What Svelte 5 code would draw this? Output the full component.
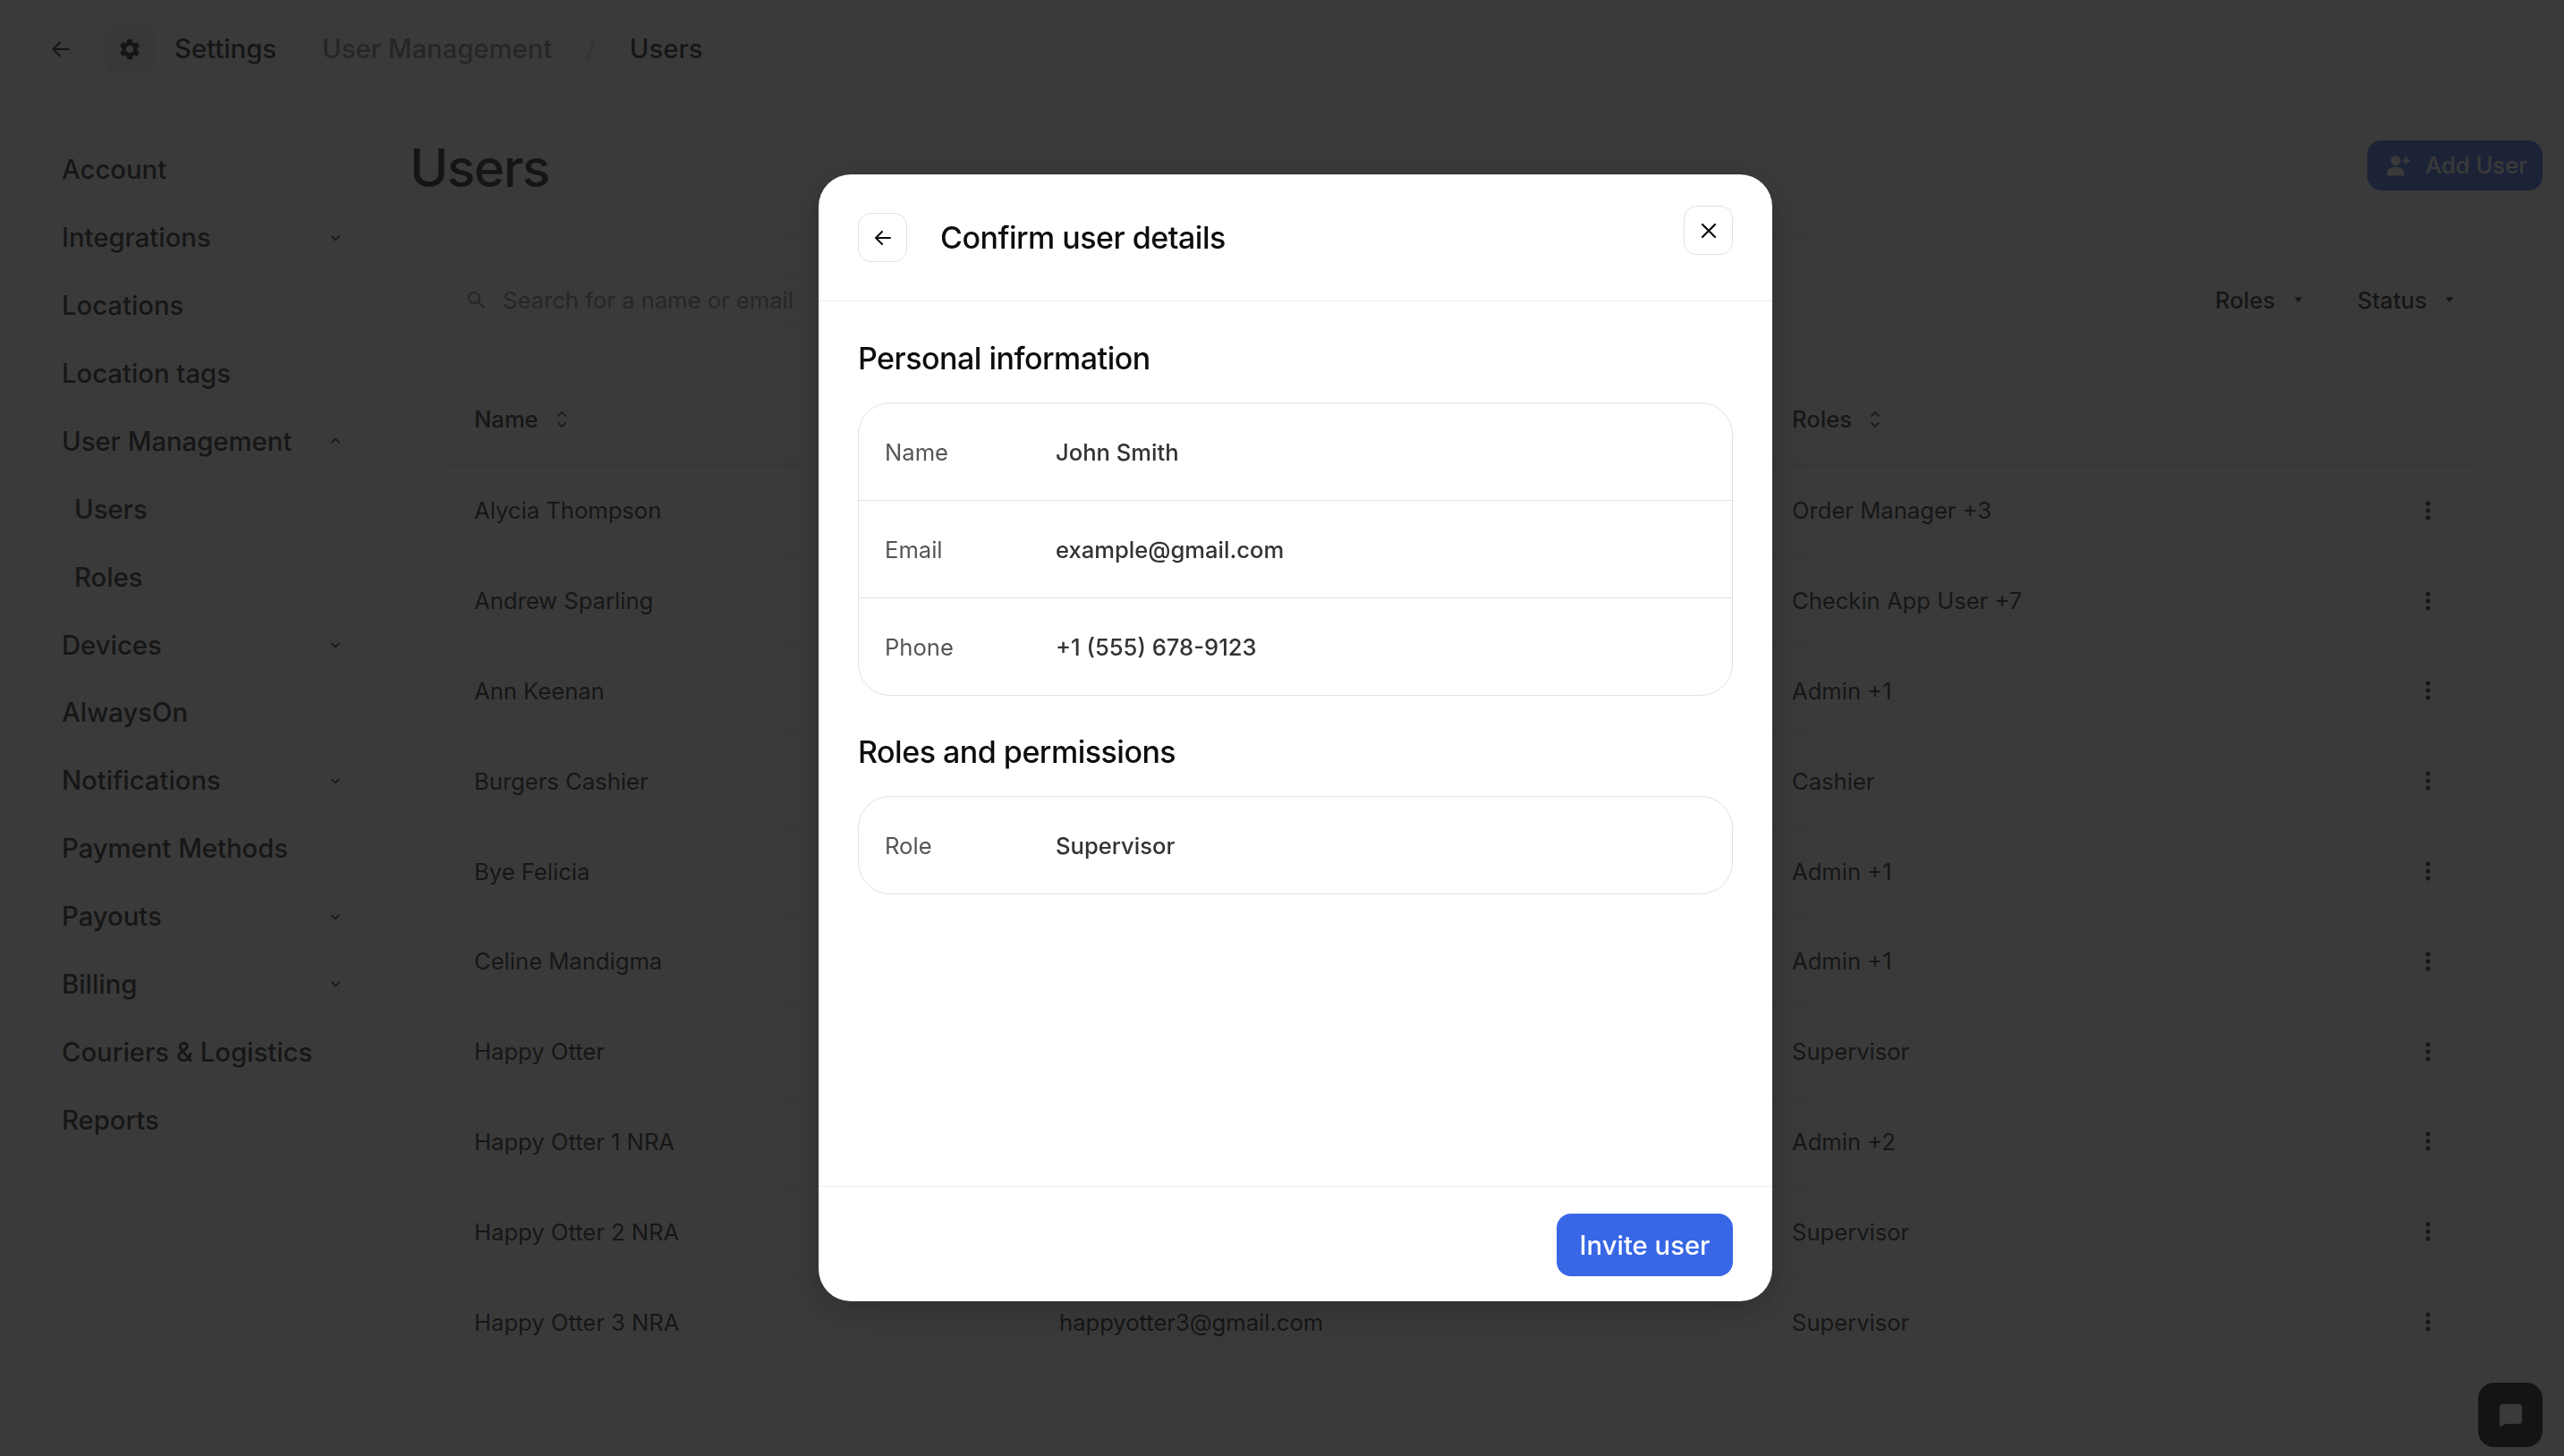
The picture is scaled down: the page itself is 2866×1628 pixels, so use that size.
<script>
	const navItems = [
		{ label: 'Account' },
		{ label: 'Integrations', chevron: 'down' },
		{ label: 'Locations' },
		{ label: 'Location tags' },
		{ label: 'User Management', chevron: 'up' },
		{ label: 'Users', sub: true, active: true },
		{ label: 'Roles', sub: true },
		{ label: 'Devices', chevron: 'down' },
		{ label: 'AlwaysOn' },
		{ label: 'Notifications', chevron: 'down' },
		{ label: 'Payment Methods' },
		{ label: 'Payouts', chevron: 'down' },
		{ label: 'Billing', chevron: 'down' },
		{ label: 'Couriers & Logistics' },
		{ label: 'Reports' }
	];

	const users = [
		{ name: 'Alycia Thompson', email: '', roles: 'Order Manager +3' },
		{ name: 'Andrew Sparling', email: '', roles: 'Checkin App User +7' },
		{ name: 'Ann Keenan', email: '', roles: 'Admin +1' },
		{ name: 'Burgers Cashier', email: '', roles: 'Cashier' },
		{ name: 'Bye Felicia', email: '', roles: 'Admin +1' },
		{ name: 'Celine Mandigma', email: '', roles: 'Admin +1' },
		{ name: 'Happy Otter', email: '', roles: 'Supervisor' },
		{ name: 'Happy Otter 1 NRA', email: '', roles: 'Admin +2' },
		{ name: 'Happy Otter 2 NRA', email: '', roles: 'Supervisor' },
		{ name: 'Happy Otter 3 NRA', email: 'happyotter3@gmail.com', roles: 'Supervisor' }
	];

	const personal = [
		{ label: 'Name', value: 'John Smith' },
		{ label: 'Email', value: 'example@gmail.com' },
		{ label: 'Phone', value: '+1 (555) 678-9123' }
	];
</script>

<div class="page">
	<header class="topbar">
		<svg class="back" viewBox="0 0 24 24" width="26" height="26" fill="none" stroke="currentColor" stroke-width="2" stroke-linecap="round" stroke-linejoin="round">
			<path d="M20 12H4.5M11 5l-7 7 7 7" />
		</svg>
		<span class="gear">
			<svg viewBox="0 0 24 24" width="28" height="28" fill="currentColor">
				<path d="M19.14 12.94c.04-.3.06-.61.06-.94 0-.32-.02-.64-.07-.94l2.03-1.58c.18-.14.23-.41.12-.61l-1.92-3.32c-.12-.22-.37-.29-.59-.22l-2.39.96c-.5-.38-1.03-.7-1.62-.94l-.36-2.54c-.04-.24-.24-.41-.48-.41h-3.84c-.24 0-.43.17-.47.41l-.36 2.54c-.59.24-1.13.57-1.62.94l-2.39-.96c-.22-.08-.47 0-.59.22L2.74 8.87c-.12.21-.08.47.12.61l2.03 1.58c-.05.3-.09.63-.09.94s.02.64.07.94l-2.03 1.58c-.18.14-.23.41-.12.61l1.92 3.32c.12.22.37.29.59.22l2.39-.96c.5.38 1.03.7 1.62.94l.36 2.54c.05.24.24.41.48.41h3.84c.24 0 .44-.17.47-.41l.36-2.54c.59-.24 1.13-.56 1.62-.94l2.39.96c.22.08.47 0 .59-.22l1.92-3.32c.12-.22.07-.47-.12-.61l-2.01-1.58zM12 15.6c-1.98 0-3.6-1.62-3.6-3.6s1.62-3.6 3.6-3.6 3.6 1.62 3.6 3.6-1.62 3.6-3.6 3.6z" />
			</svg>
		</span>
		<span class="crumb-root">Settings</span>
		<span class="crumb-muted">User Management</span>
		<span class="crumb-slash">/</span>
		<span class="crumb-current">Users</span>
	</header>

	<div class="layout">
		<nav class="sidebar">
			{#each navItems as item}
				<div class="nav-item" class:sub={item.sub} class:active={item.active}>
					<span>{item.label}</span>
					{#if item.chevron}
						<svg class="chev" class:up={item.chevron === 'up'} viewBox="0 0 12 12" width="14" height="14" fill="none" stroke="currentColor" stroke-width="1.5" stroke-linecap="round" stroke-linejoin="round">
							<path d="M2.5 4.5 6 8l3.5-3.5" />
						</svg>
					{/if}
				</div>
			{/each}
		</nav>

		<main class="content">
			<div class="title-row">
				<h1>Users</h1>
				<button class="add-user">
					<svg viewBox="0 0 26 24" width="28" height="26" fill="currentColor">
						<circle cx="10" cy="7" r="5" />
						<path d="M1 21c0-5 4-7.5 9-7.5s9 2.500 9 7.500c0 1-.6 1.500-1.500 1.500h-15C1.600 22.500 1 22 1 21z" />
						<path d="M20 3h2v3h3v2h-3v3h-2V8h-3V6h3z" />
					</svg>
					Add User
				</button>
			</div>

			<section class="panel">
				<div class="toolbar">
					<div class="search">
						<svg viewBox="0 0 24 24" width="24" height="24" fill="none" stroke="currentColor" stroke-width="2" stroke-linecap="round">
							<circle cx="10" cy="10" r="6" />
							<path d="m15 15 6 6" />
						</svg>
						<span>Search for a name or email</span>
					</div>
					<div class="filters">
						<div class="filter roles-filter">
							Roles
							<svg viewBox="0 0 12 12" width="12" height="12" fill="currentColor"><path d="M1.500 3.500h9L6 9z" /></svg>
						</div>
						<div class="filter status-filter">
							Status
							<svg viewBox="0 0 12 12" width="12" height="12" fill="currentColor"><path d="M1.500 3.500h9L6 9z" /></svg>
						</div>
					</div>
				</div>

				<div class="table">
					<div class="row head">
						<span class="cell-name">Name
							<svg viewBox="0 0 12 24" width="12" height="24" fill="none" stroke="currentColor" stroke-width="1.7" stroke-linecap="round" stroke-linejoin="round"><path d="M2 8l4-4 4 4M2 16l4 4 4-4" /></svg>
						</span>
						<span></span>
						<span class="cell-name">Roles
							<svg viewBox="0 0 12 24" width="12" height="24" fill="none" stroke="currentColor" stroke-width="1.7" stroke-linecap="round" stroke-linejoin="round"><path d="M2 8l4-4 4 4M2 16l4 4 4-4" /></svg>
						</span>
						<span></span>
					</div>
					{#each users as user}
						<div class="row">
							<span>{user.name}</span>
							<span>{user.email}</span>
							<span>{user.roles}</span>
							<svg class="dots" viewBox="0 0 6 24" width="6" height="24" fill="currentColor">
								<circle cx="3" cy="4" r="2.500" /><circle cx="3" cy="12" r="2.500" /><circle cx="3" cy="20" r="2.500" />
							</svg>
						</div>
					{/each}
				</div>
			</section>
		</main>
	</div>

	<button class="chat" aria-label="Chat">
		<svg viewBox="0 0 24 24" width="25" height="25" fill="currentColor">
			<path d="M3 0h18a3 3 0 0 1 3 3v15a3 3 0 0 1-3 3H6l-5 3.500c-.5.300-1 0-1-.5V3a3 3 0 0 1 3-3z" />
		</svg>
	</button>
</div>

<div class="overlay"></div>

<div class="modal">
	<div class="modal-head">
		<button class="icon-btn" aria-label="Back">
			<svg viewBox="0 0 24 24" width="24" height="24" fill="none" stroke="currentColor" stroke-width="2" stroke-linecap="round" stroke-linejoin="round">
				<path d="M20 12H4.500M11 5l-7 7 7 7" />
			</svg>
		</button>
		<h2>Confirm user details</h2>
		<button class="icon-btn close" aria-label="Close">
			<svg viewBox="0 0 24 24" width="24" height="24" fill="none" stroke="currentColor" stroke-width="2.200" stroke-linecap="round">
				<path d="M5 5l14 14M19 5 5 19" />
			</svg>
		</button>
	</div>

	<div class="modal-body">
		<h3>Personal information</h3>
		<div class="details">
			{#each personal as row}
				<div class="detail">
					<span class="detail-label">{row.label}</span>
					<span class="detail-value">{row.value}</span>
				</div>
			{/each}
		</div>

		<h3 class="second">Roles and permissions</h3>
		<div class="details">
			<div class="detail">
				<span class="detail-label">Role</span>
				<span class="detail-value">Supervisor</span>
			</div>
		</div>
	</div>

	<div class="modal-foot">
		<button class="invite">Invite user</button>
	</div>
</div>

<style>
	:global(body) {
		margin: 0;
		background: #fff;
	}

	.page,
	.modal,
	button {
		font-family: Inter, 'Liberation Sans', sans-serif;
	}

	.page {
		width: 2866px;
		height: 1628px;
		overflow: hidden;
		position: relative;
		background: #fff;
		color: #0d0d0d;
	}

	button {
		border: 0;
		cursor: pointer;
	}

	.topbar {
		display: flex;
		align-items: center;
		height: 110px;
		box-sizing: border-box;
		padding-left: 55px;
		border-bottom: 1px solid #e8e8e8;
		font-size: 29.25px;
		font-weight: 500;
	}

	.back {
		margin-right: 36px;
	}

	.gear {
		display: flex;
		align-items: center;
		justify-content: center;
		width: 56px;
		height: 56px;
		border-radius: 14px;
		background: #efefef;
		margin-right: 22px;
	}

	.crumb-muted {
		margin-left: 51px;
		color: #7a7a7a;
	}

	.crumb-slash {
		margin-left: 38px;
		color: #d0d0d0;
		font-weight: 400;
	}

	.crumb-current {
		margin-left: 38px;
	}

	.layout {
		display: flex;
	}

	.sidebar {
		width: 457px;
		flex: none;
		box-sizing: border-box;
		padding: 42px 59px 0 69px;
	}

	.nav-item {
		display: flex;
		align-items: center;
		justify-content: space-between;
		height: 75.88px;
		box-sizing: border-box;
		padding-right: 16px;
		font-size: 29.25px;
		font-weight: 500;
		color: #111;
	}

	.nav-item.sub {
		padding-left: 14px;
	}

	.nav-item.active {
		background: #f3f3f3;
		border-radius: 14px;
	}

	.chev.up {
		transform: rotate(180deg);
	}

	.content {
		flex: 1;
		min-width: 0;
		padding-right: 55px;
	}

	.title-row {
		display: flex;
		align-items: center;
		justify-content: space-between;
		height: 152px;
		margin-right: -30.500px;
		padding-left: 1px;
	}

	h1 {
		margin: 0 0 -2px;
		font-size: 58.500px;
		font-weight: 500;
		letter-spacing: -1.500px;
	}

	.add-user {
		display: flex;
		align-items: center;
		gap: 16px;
		width: 195.500px;
		height: 56px;
		margin-top: -3px;
		box-sizing: border-box;
		padding-left: 21px;
		border-radius: 16px;
		background: #3767e5;
		color: #fff;
		font-size: 25.600px;
		font-weight: 500;
	}

	.panel {
		height: 1500px;
		box-sizing: border-box;
		padding: 44px 43px 0 44px;
		border: 1px solid #e8e8e8;
		border-radius: 36px;
	}

	.toolbar {
		display: flex;
		justify-content: space-between;
		height: 56px;
		font-size: 25.600px;
	}

	.search {
		display: flex;
		align-items: center;
		gap: 18px;
		width: 600px;
		box-sizing: border-box;
		padding-left: 17px;
		border: 1px solid #e8e8e8;
		border-radius: 16px;
		color: #7a7a7a;
	}

	.filters {
		display: flex;
		gap: 15px;
	}

	.filter {
		display: flex;
		align-items: center;
		justify-content: space-between;
		box-sizing: border-box;
		border: 1px solid #e8e8e8;
		border-radius: 16px;
		font-weight: 500;
	}

	.roles-filter {
		width: 143px;
		padding: 0 22px 0 20px;
	}

	.status-filter {
		width: 154px;
		padding: 0 22px 0 21px;
	}

	.table {
		margin-top: 56px;
		font-size: 25.600px;
		color: #111;
	}

	.row {
		display: grid;
		grid-template-columns: 654px 819px 708px 1fr;
		align-items: center;
		height: 100.800px;
		box-sizing: border-box;
		padding-left: 28px;
		border-bottom: 1px solid #ececec;
	}

	.row.head {
		height: 102px;
		border-bottom-width: 3px;
		font-weight: 500;
	}

	.cell-name {
		display: flex;
		align-items: center;
		gap: 20px;
	}

	.modal-foot,
	.modal-head {
		display: flex;
	}

	.overlay {
		position: fixed;
		inset: 0;
		background: rgba(23, 23, 23, 0.85);
	}

	.chat {
		position: absolute;
		left: 2770px;
		top: 1546px;
		display: flex;
		align-items: center;
		justify-content: center;
		width: 72px;
		height: 72px;
		border-radius: 18px;
		background: #000;
		color: #fff;
	}

	.modal {
		position: fixed;
		left: 915px;
		top: 195px;
		display: flex;
		flex-direction: column;
		width: 1066px;
		height: 1260px;
		border-radius: 36px;
		background: #fff;
		color: #0d0d0d;
		box-shadow: 0 10px 40px rgba(0, 0, 0, 0.2);
	}

	.modal-head {
		flex: none;
		align-items: center;
		height: 142px;
		box-sizing: border-box;
		padding: 0 44px;
		border-bottom: 1px solid #ececec;
	}

	.icon-btn {
		display: flex;
		align-items: center;
		justify-content: center;
		width: 55px;
		height: 55px;
		flex: none;
		padding: 0;
		background: #fff;
		border: 1px solid #e2e2e2;
		border-radius: 14px;
		color: #0d0d0d;
	}

	.close {
		align-self: flex-start;
		margin-top: 35px;
	}

	h2 {
		flex: 1;
		margin: 0 0 0 37px;
		font-size: 34px;
		font-weight: 500;
		letter-spacing: -0.500px;
	}

	.modal-body {
		flex: 1;
		padding: 40px 44px 0;
	}

	h3 {
		margin: 0 0 25px;
		height: 48px;
		line-height: 48px;
		font-size: 34px;
		font-weight: 500;
		letter-spacing: -0.500px;
	}

	h3.second {
		margin-top: 39px;
	}

	.details {
		border: 1px solid #e2e2e2;
		border-radius: 36px;
	}

	.detail {
		display: flex;
		align-items: center;
		height: 108px;
		padding-left: 29px;
		font-size: 25.600px;
	}

	.detail + .detail {
		border-top: 1px solid #e2e2e2;
	}

	.detail-label {
		width: 191px;
		color: #555;
	}

	.detail-value {
		color: #333;
		font-weight: 500;
	}

	.modal-foot {
		flex: none;
		justify-content: flex-end;
		height: 129px;
		box-sizing: border-box;
		padding: 30px 44px 0;
		border-top: 1px solid #ececec;
	}

	.invite {
		width: 197px;
		height: 70px;
		border-radius: 16px;
		background: #3767e5;
		color: #fff;
		font-size: 29.250px;
		font-weight: 500;
	}
</style>
